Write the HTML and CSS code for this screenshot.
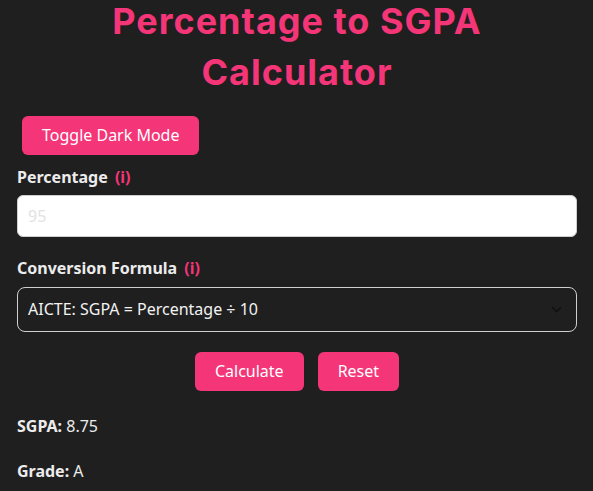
FILE: index.html
```html
<!DOCTYPE html>
<html lang="en">
<head>
<meta charset="utf-8">
<title>Percentage to SGPA Calculator</title>
<link rel="stylesheet" href="styles.css">
</head>
<body>
<main class="page">
  <h1 class="title">Percentage to SGPA Calculator</h1>
  <div class="toggle-row"><button class="btn btn-toggle">Toggle Dark Mode</button></div>
  <label class="label">Percentage <span class="info">(i)</span></label>
  <div class="input"><span class="placeholder">95</span></div>
  <label class="label label-formula">Conversion Formula <span class="info">(i)</span></label>
  <div class="select">
    <span>AICTE: SGPA = Percentage ÷ 10</span>
    <svg class="chev" width="11" height="7" viewBox="0 0 11 7"><path d="M1 1 L5.5 5.5 L10 1" fill="none" stroke="#111" stroke-width="1.6"/></svg>
  </div>
  <div class="actions">
    <button class="btn">Calculate</button>
    <button class="btn">Reset</button>
  </div>
  <p class="result"><b>SGPA:</b> 8.75</p>
  <p class="result"><b>Grade:</b> A</p>
</main>
</body>
</html>
```
FILE: styles.css
```css
html, body {
  margin: 0;
  padding: 0;
  background: #1f1f1f;
}
.page {
  display: flex;
  flex-direction: column;
  padding: 0 16px 0 17px;
  font-family: "Noto Sans", "Open Sans", sans-serif;
  font-size: 16px;
  color: #ececec;
}
.title {
  margin: -4px 0 0;
  font-family: Inter, "Noto Sans", sans-serif;
  font-weight: 700;
  font-size: 36px;
  line-height: 51px;
  letter-spacing: 1px;
  color: #f43578;
  text-align: center;
  padding: 0 90px;
}
.toggle-row {
  display: flex;
  margin-top: 18px;
  padding-left: 5px;
}
.btn {
  font-family: "Noto Sans", "Open Sans", sans-serif;
  font-size: 16px;
  line-height: 19px;
  padding: 10px 20px;
  border: none;
  border-radius: 6px;
  background: #f43578;
  color: #fff;
}
.label {
  display: block;
  margin-top: 12px;
  font-weight: 700;
  line-height: 20px;
  color: #ececec;
}
.info {
  color: #f43578;
  margin-left: 3px;
}
.input {
  margin-top: 8px;
  height: 20px;
  padding: 10px;
  background: #fff;
  border: 1px solid #cfcfcf;
  border-radius: 6px;
  line-height: 20px;
}
.placeholder {
  color: #e2e2e2;
}
.label-formula {
  margin-top: 21px;
}
.select {
  margin-top: 9px;
  display: flex;
  align-items: center;
  justify-content: space-between;
  padding: 12px 14px 12px 10px;
  line-height: 19px;
  border: 1px solid #cfcfcf;
  border-radius: 8px;
  color: #f2f2f2;
}
.actions {
  display: flex;
  justify-content: center;
  gap: 14px;
  margin-top: 20px;
}
.result {
  margin: 25px 0 0;
  line-height: 20px;
}
.result b {
  font-weight: 700;
}
```
